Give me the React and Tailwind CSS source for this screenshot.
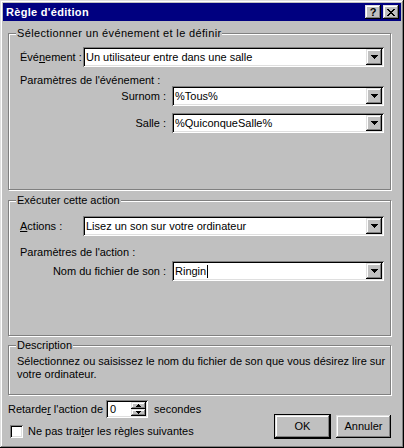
import React from "react";

const RAISED =
  "shadow-[inset_-1px_-1px_0_#000,inset_1px_1px_0_#dfdfdf,inset_-2px_-2px_0_#808080,inset_2px_2px_0_#fff]";
const SUNKEN =
  "shadow-[inset_1px_1px_0_#808080,inset_-1px_-1px_0_#fff,inset_2px_2px_0_#000,inset_-2px_-2px_0_#dfdfdf]";

function Arrow({ up }) {
  return (
    <svg width="7" height="4" viewBox="0 0 7 4" shapeRendering="crispEdges" style={up ? { transform: "rotate(180deg)" } : undefined}>
      <rect x="0" y="0" width="7" height="1" fill="#000" />
      <rect x="1" y="1" width="5" height="1" fill="#000" />
      <rect x="2" y="2" width="3" height="1" fill="#000" />
      <rect x="3" y="3" width="1" height="1" fill="#000" />
    </svg>
  );
}

function SmallArrow({ up }) {
  return (
    <svg width="5" height="3" viewBox="0 0 5 3" shapeRendering="crispEdges" style={up ? { transform: "rotate(180deg)" } : undefined}>
      <rect x="0" y="0" width="5" height="1" fill="#000" />
      <rect x="1" y="1" width="3" height="1" fill="#000" />
      <rect x="2" y="2" width="1" height="1" fill="#000" />
    </svg>
  );
}

function Combo({ value, cursor }) {
  return (
    <div className={`flex h-[20px] flex-1 bg-white p-[2px] ${SUNKEN}`}>
      <div className="flex flex-1 items-center pl-[1px] leading-none whitespace-nowrap">
        {value}
        {cursor && <span className="ml-[1px] inline-block h-[13px] w-px bg-black" />}
      </div>
      <div className={`flex w-[16px] items-center justify-center bg-[#c0c0c0] ${RAISED}`}>
        <Arrow />
      </div>
    </div>
  );
}

function Group({ label, labelClass = "", className, children }) {
  return (
    <div className={`relative w-[383px] border border-[#808080] shadow-[inset_1px_1px_0_#fff,1px_1px_0_#fff] ${className}`}>
      <span className={`absolute left-[7px] top-[-7px] bg-[#c0c0c0] px-[1px] leading-[13px] ${labelClass}`}>{label}</span>
      {children}
    </div>
  );
}

function Btn({ children, def }) {
  const inner = (
    <div className={`flex h-[23px] w-[55px] items-center justify-center bg-[#c0c0c0] ${RAISED}`}>{children}</div>
  );
  if (def) return <div className="border border-black">{inner}</div>;
  return inner;
}

export default function App() {
  return (
    <div
      className={`flex h-[448px] w-[404px] flex-col bg-[#c0c0c0] p-[3px] text-[11px] text-black ${RAISED}`}
      style={{ fontFamily: '"Liberation Sans", Arial, sans-serif' }}
    >
      {/* Title bar */}
      <div className="flex h-[18px] items-center bg-[#000080] pl-[3px] pr-[2px]">
        <span className="flex-1 font-bold text-white leading-none tracking-[0.3px]">Règle d'édition</span>
        <div className={`flex h-[14px] w-[16px] items-center justify-center bg-[#c0c0c0] font-bold leading-none ${RAISED}`}>
          <span className="mt-[1px]">?</span>
        </div>
        <div className={`ml-[2px] flex h-[14px] w-[16px] items-center justify-center bg-[#c0c0c0] ${RAISED}`}>
          <svg width="8" height="7" viewBox="0 0 8 7" shapeRendering="crispEdges">
            <rect x="0" y="0" width="2" height="1" /><rect x="6" y="0" width="2" height="1" />
            <rect x="1" y="1" width="2" height="1" /><rect x="5" y="1" width="2" height="1" />
            <rect x="2" y="2" width="4" height="1" />
            <rect x="3" y="3" width="2" height="1" />
            <rect x="2" y="4" width="4" height="1" />
            <rect x="1" y="5" width="2" height="1" /><rect x="5" y="5" width="2" height="1" />
            <rect x="0" y="6" width="2" height="1" /><rect x="6" y="6" width="2" height="1" />
          </svg>
        </div>
      </div>

      <div className="flex flex-col pl-[5px]">
        {/* Group 1 */}
        <Group
          label="Sélectionner un événement et le définir"
          labelClass="tracking-[0.35px]"
          className="mt-[12px] h-[157px] pl-[11px] pr-[6px] pt-[13px]"
        >
          <div className="flex items-center">
            <span className="w-[63px] whitespace-nowrap">
              Évé<span className="underline">n</span>ement :
            </span>
            <Combo value="Un utilisateur entre dans une salle" />
          </div>
          <div className="mt-[7px] h-[12px] leading-[12px]">Paramètres de l'événement :</div>
          <div className="flex items-center">
            <span className="w-[152px] pr-[6px] text-right">Surnom :</span>
            <Combo value="%Tous%" />
          </div>
          <div className="mt-[7px] flex items-center">
            <span className="w-[152px] pr-[6px] text-right">Salle :</span>
            <Combo value="%QuiconqueSalle%" />
          </div>
        </Group>

        {/* Group 2 */}
        <Group label="Exécuter cette action" className="mt-[10px] h-[136px] pl-[11px] pr-[6px] pt-[15px]">
          <div className="flex items-center">
            <span className="w-[63px] whitespace-nowrap">
              <span className="underline">A</span>ctions :
            </span>
            <Combo value="Lisez un son sur votre ordinateur" />
          </div>
          <div className="mt-[10px] h-[12px] leading-[12px]">Paramètres de l'action :</div>
          <div className="mt-[3px] flex items-center">
            <span className="w-[152px] pr-[6px] text-right whitespace-nowrap">Nom du fichier de son :</span>
            <Combo value="Ringin" cursor />
          </div>
        </Group>

        {/* Description */}
        <Group label="Description" className="mt-[9px] h-[50px] pl-[8px] pt-[9px]">
          <div className="leading-[13px]">
            Sélectionnez ou saisissez le nom du fichier de son que vous désirez lire sur
            <br />
            votre ordinateur.
          </div>
        </Group>

        {/* Bottom */}
        <div className="flex w-[383px] justify-between">
          <div className="flex flex-col">
            <div className="mt-[5px] flex h-[18px] items-center">
              <span className="whitespace-nowrap">
                Retarde<span className="underline">r</span> l'action de
              </span>
              <div className={`ml-[3px] flex h-[18px] w-[42px] bg-white p-[2px] ${SUNKEN}`}>
                <span className="flex-1 pl-[2px] leading-[14px]">0</span>
                <div className="flex w-[15px] flex-col">
                  <div className={`flex flex-1 items-center justify-center bg-[#c0c0c0] ${RAISED}`}>
                    <SmallArrow up />
                  </div>
                  <div className={`flex flex-1 items-center justify-center bg-[#c0c0c0] ${RAISED}`}>
                    <SmallArrow />
                  </div>
                </div>
              </div>
              <span className="ml-[6px]">secondes</span>
            </div>
            <div className="mt-[5px] flex items-center pl-[2px]">
              <div className={`h-[13px] w-[13px] bg-white ${SUNKEN}`} />
              <span className="ml-[5px] whitespace-nowrap">
                Ne pas trai<span className="underline">t</span>er les règles suivantes
              </span>
            </div>
          </div>
          <div className="mt-[18px] flex items-center gap-[5px]">
            <Btn def>OK</Btn>
            <Btn>Annuler</Btn>
          </div>
        </div>
      </div>
    </div>
  );
}
